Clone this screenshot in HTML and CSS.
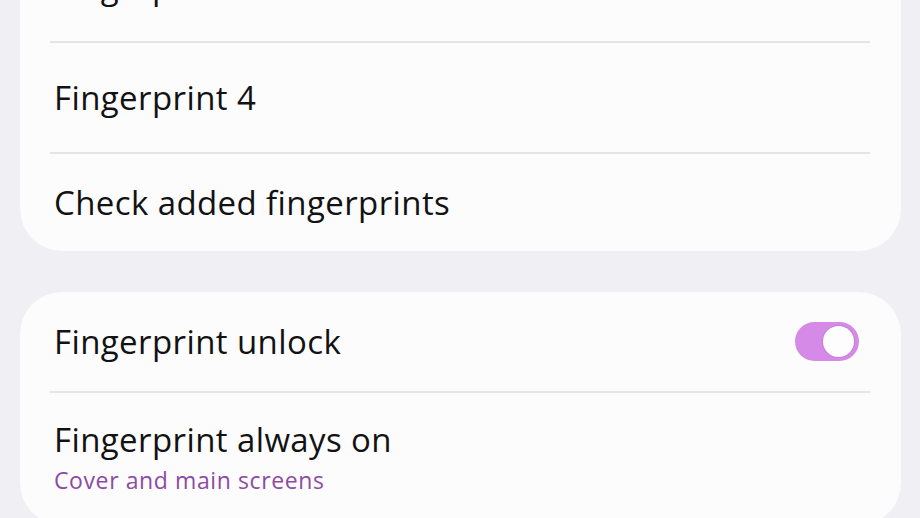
FILE: index.html
```html
<!DOCTYPE html>
<html lang="en">
<head>
<meta charset="utf-8">
<title>Fingerprints</title>
<link rel="stylesheet" href="styles.css">
</head>
<body>
<main class="page">
  <section class="card card-first">
    <div class="row row-tall"><span class="title">Fingerprint 3</span></div>
    <div class="divider"></div>
    <div class="row row-tall"><span class="title">Fingerprint 4</span></div>
    <div class="divider"></div>
    <div class="row row-end"><span class="title">Check added fingerprints</span></div>
  </section>
  <section class="card card-second">
    <div class="row row-switch">
      <span class="title">Fingerprint unlock</span>
      <span class="switch" role="switch" aria-checked="true"><span class="knob"></span></span>
    </div>
    <div class="divider"></div>
    <div class="row row-sub">
      <span class="title">Fingerprint always on</span>
      <span class="subtitle">Cover and main screens</span>
    </div>
  </section>
</main>
</body>
</html>
```

FILE: styles.css
```css
html, body {
  margin: 0;
  padding: 0;
  background: #efeff4;
  overflow: hidden;
}
body {
  font-family: "Open Sans", "Noto Sans", sans-serif;
  color: #121212;
}
.page {
  padding: 0 19px 0 20px;
  display: flex;
  flex-direction: column;
}
.card {
  background: #fcfcfd;
  border-radius: 42px;
  display: flex;
  flex-direction: column;
}
.card-first {
  margin-top: -68px;
}
.card-second {
  margin-top: 41px;
}
.row {
  display: flex;
  align-items: center;
  padding: 0 30px 0 34px;
}
.row-tall { height: 109px; }
.row-end { height: 97px; }
.row-switch {
  height: 99px;
  justify-content: space-between;
  padding-right: 42px;
}
.row-sub {
  flex-direction: column;
  align-items: flex-start;
  padding-top: 27px;
  padding-bottom: 30px;
}
.title {
  font-size: 33px;
  line-height: 40px;
  letter-spacing: 0.4px;
}
.subtitle {
  font-size: 23px;
  line-height: 30px;
  letter-spacing: 0.6px;
  color: #8e4aa5;
  margin-top: 5px;
}
.divider {
  height: 2px;
  background: #e5e5e8;
  margin: 0 31px 0 30px;
}
.switch {
  width: 64px;
  height: 39px;
  border-radius: 20px;
  background: #d58ae7;
  box-sizing: border-box;
  display: flex;
  align-items: center;
  justify-content: flex-end;
  padding-right: 5px;
}
.knob {
  width: 31px;
  height: 31px;
  border-radius: 50%;
  background: #fdfdfd;
  box-shadow: 0 0 0 1px #c480d9;
}
```
